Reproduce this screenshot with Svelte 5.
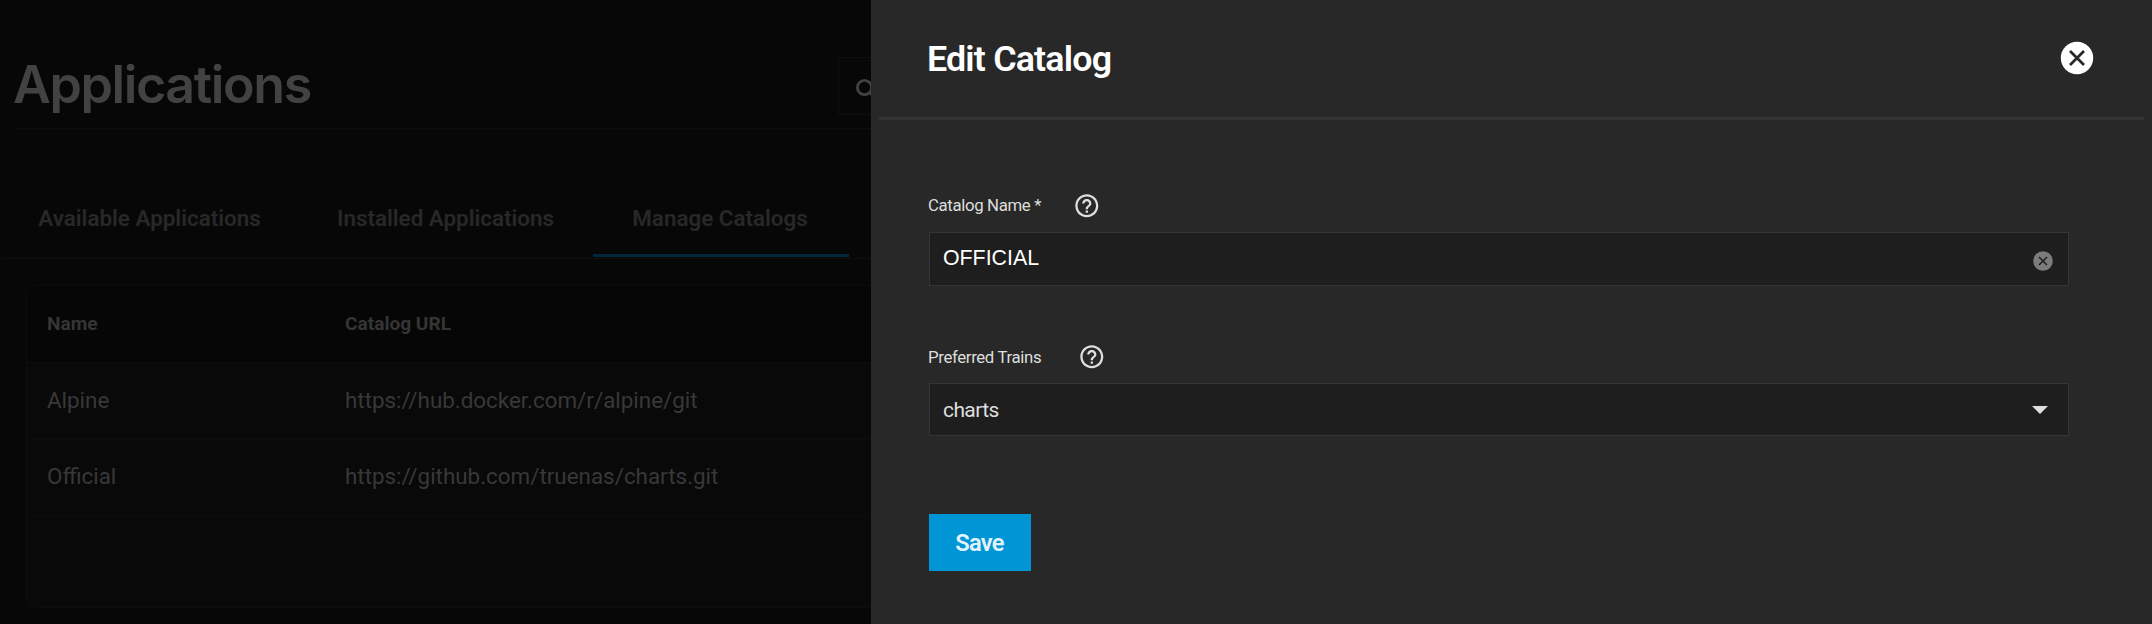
<script>
  const tabs = ['Available Applications', 'Installed Applications', 'Manage Catalogs'];
  const active = 2;
  const rows = [
    { name: 'Alpine', url: 'https://hub.docker.com/r/alpine/git' },
    { name: 'Official', url: 'https://github.com/truenas/charts.git' }
  ];
</script>

{#snippet help()}
  <svg class="help" viewBox="0 0 24 24" aria-hidden="true">
    <path d="M11 18h2v-2h-2v2zm1-16C6.48 2 2 6.48 2 12s4.48 10 10 10 10-4.48 10-10S17.52 2 12 2zm0 18c-4.41 0-8-3.59-8-8s3.59-8 8-8 8 3.59 8 8-3.59 8-8 8zm0-14c-2.21 0-4 1.79-4 4h2c0-1.1.9-2 2-2s2 .9 2 2c0 2-3 1.75-3 5h2c0-2.25 3-2.5 3-5 0-2.21-1.79-4-4-4z" />
  </svg>
{/snippet}

<div class="app">
  <main>
    <header class="top">
      <h1>Applications</h1>
      <div class="search">
        <svg viewBox="0 0 24 24" aria-hidden="true">
          <circle cx="10" cy="10" r="5.7" />
          <path d="M14 14l6 6" />
        </svg>
      </div>
    </header>
    <nav>
      {#each tabs as tab, i}
        <div class="tab t{i}" class:active={i === active}><span>{tab}</span></div>
      {/each}
    </nav>
    <section class="card">
      <div class="row head"><span>Name</span><span>Catalog URL</span></div>
      {#each rows as row}
        <div class="row"><span>{row.name}</span><span>{row.url}</span></div>
      {/each}
    </section>
  </main>

  <aside>
    <header class="panel-head">
      <h2>Edit Catalog</h2>
      <svg class="close" viewBox="0 0 34 34" aria-hidden="true">
        <circle cx="17" cy="17" r="16.2" fill="#fff" />
        <path d="M10 10l14 14M24 10l-14 14" stroke="#282828" stroke-width="2.8" />
      </svg>
    </header>
    <form>
      <div class="label first"><label for="name">Catalog Name *</label>{@render help()}</div>
      <div class="field name" id="name">
        <span>OFFICIAL</span>
        <svg class="clear" viewBox="0 0 20 20" aria-hidden="true">
          <circle cx="10" cy="10" r="9.8" fill="#7c7c7c" />
          <path d="M6 6l8 8M14 6l-8 8" stroke="#1e1e1e" stroke-width="1.5" />
        </svg>
      </div>
      <div class="label second"><label for="trains">Preferred Trains</label>{@render help()}</div>
      <div class="field trains" id="trains">
        <span>charts</span>
        <svg class="arrow" viewBox="0 0 16 8" aria-hidden="true"><path d="M0 0h16l-8 8z" fill="#dedede" /></svg>
      </div>
      <button type="button">Save</button>
    </form>
  </aside>
</div>

<style>
  .app {
    display: flex;
    width: 2152px;
    height: 624px;
    overflow: hidden;
    background: #070707;
    font-family: Roboto, sans-serif;
  }
  main {
    width: 871px;
    flex: none;
    overflow: hidden;
    box-sizing: border-box;
  }
  .top {
    display: flex;
    justify-content: space-between;
    height: 128px;
    margin-left: 13px;
    border-bottom: 1px solid #0d0d0d;
  }
  h1 {
    margin: 53px 0 0;
    font: 600 52px/64px Inter, sans-serif;
    letter-spacing: -1.4px;
    color: #424242;
    white-space: nowrap;
  }
  .search {
    width: 32px;
    height: 56px;
    margin-top: 57px;
    border: 1px solid #0e0e0e;
    border-right: 0;
    overflow: hidden;
  }
  .search svg {
    display: block;
    width: 30px;
    height: 30px;
    margin: 17px 0 0 13px;
    fill: none;
    stroke: #424242;
    stroke-width: 2.3;
  }
  nav {
    display: flex;
    height: 129px;
    margin-left: 1px;
    border-bottom: 1px solid #0e0e0e;
    align-items: flex-end;
  }
  .tab {
    height: 52px;
    display: flex;
    justify-content: center;
    box-sizing: border-box;
    margin-bottom: 1px;
    border-bottom: 3px solid transparent;
    font-size: 22.4px;
    line-height: 26px;
    font-weight: 600;
    color: #282828;
    white-space: nowrap;
  }
  .t0 { width: 298px; }
  .t1 { width: 294px; }
  .t2 { width: 256px; }
  .tab span { margin-left: -1px; }
  .t2 span { margin-left: -2px; }
  .active { border-bottom-color: #00273a; }
  .card {
    box-sizing: border-box;
    height: 323px;
    margin: 26px 0 0 26px;
    border: 1px solid #0d0d0d;
    border-right: 0;
    border-radius: 9px 0 0 9px;
    background: #090909;
    overflow: hidden;
  }
  .row {
    display: grid;
    grid-template-columns: 298px 1fr;
    align-items: center;
    box-sizing: border-box;
    height: 77px;
    padding: 0 0 2px 20px;
    border-bottom: 1px solid #0d0d0d;
    font-size: 22.4px;
    color: #383838;
    white-space: nowrap;
  }
  .row:last-child { padding-bottom: 4px; }
  .head {
    background: #060606;
    font-size: 19.1px;
    font-weight: 700;
    color: #353535;
  }
  aside {
    flex: 1;
    background: #282828;
    display: flex;
    flex-direction: column;
  }
  .panel-head {
    display: flex;
    justify-content: space-between;
    align-items: flex-start;
    height: 117px;
    margin: 0 8px;
    padding: 0 50px 0 48px;
    border-bottom: 3px solid #333;
    box-sizing: content-box;
  }
  h2 {
    margin: 35px 0 0;
    font: 600 35.8px/48px Roboto, sans-serif;
    letter-spacing: -0.82px;
    color: #fff;
    white-space: nowrap;
  }
  .close {
    width: 34px;
    height: 34px;
    margin-top: 41px;
  }
  form {
    padding: 0 83px 0 58px;
    display: flex;
    flex-direction: column;
  }
  .label {
    display: flex;
    align-items: center;
    height: 28px;
    font-size: 16.8px;
    letter-spacing: -0.35px;
    color: #dedede;
  }
  .label label {
    margin-left: -1px;
    white-space: nowrap;
  }
  .first { margin-top: 72px; }
  .first label { width: 145px; padding-bottom: 2px; }
  .second { margin-top: 57px; }
  .second label { width: 150px; }
  .help {
    width: 27.6px;
    height: 27.6px;
    fill: #dedede;
  }
  .field {
    display: flex;
    justify-content: space-between;
    align-items: center;
    box-sizing: border-box;
    background: #1e1e1e;
    border: 1px solid #353535;
    color: #dedede;
  }
  .name {
    height: 54px;
    margin-top: 12px;
    padding: 0 15px 0 13px;
    font: 21.33px "Liberation Sans", sans-serif;
    color: #fff;
  }
  .name span { padding-bottom: 2px; }
  .trains {
    height: 53px;
    margin-top: 12px;
    padding: 0 20px 0 13px;
    font-size: 21px;
    letter-spacing: -0.6px;
  }
  .clear { width: 20px; height: 20px; margin-top: 3px; }
  .arrow { width: 16px; height: 8px; }
  button {
    align-self: flex-start;
    width: 102px;
    height: 57px;
    margin-top: 78px;
    padding: 1px 1px 0 0;
    border: 0;
    background: #0095d5;
    font: 600 23.7px Roboto, sans-serif;
    letter-spacing: -0.8px;
    color: #e3f3fb;
  }
</style>
